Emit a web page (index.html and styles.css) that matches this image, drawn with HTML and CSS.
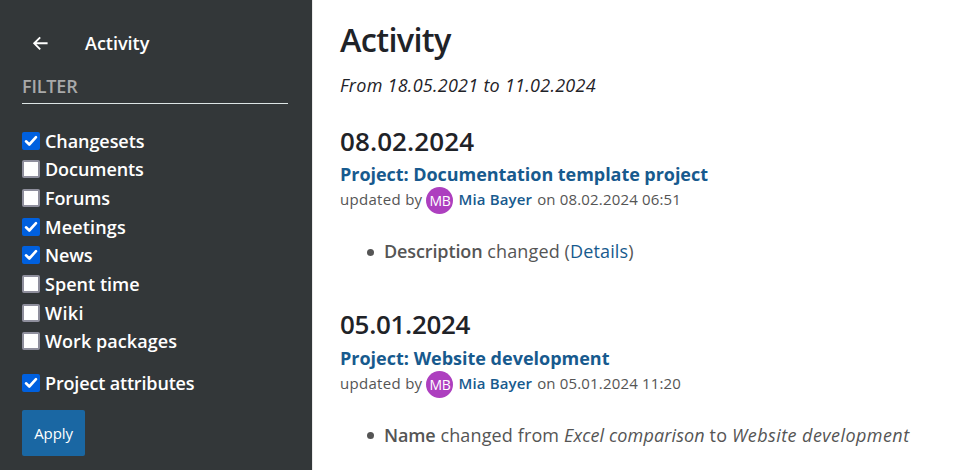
FILE: index.html
```html
<!DOCTYPE html>
<html lang="en">
<head>
<meta charset="utf-8">
<title>Activity</title>
<link rel="stylesheet" href="styles.css">
</head>
<body>
<aside class="sidebar">
  <header class="menu-head">
    <svg class="back" viewBox="0 0 16 16" width="16" height="16"><path d="M8.2 2.3 2.2 8.3 8.2 14.3M2.4 8.3H15.6" fill="none" stroke="#fff" stroke-width="1.9"/></svg>
    <span class="menu-title">Activity</span>
  </header>
  <div class="filter-title">FILTER</div>
  <form class="filters">
    <label class="row"><span class="box on"><svg viewBox="0 0 18 18"><path d="M4 9.3 7.3 12.5 14 5.2"/></svg></span><span class="t1">Changesets</span></label>
    <label class="row"><span class="box"></span><span class="t2">Documents</span></label>
    <label class="row"><span class="box"></span><span class="t3">Forums</span></label>
    <label class="row"><span class="box on"><svg viewBox="0 0 18 18"><path d="M4 9.3 7.3 12.5 14 5.2"/></svg></span><span class="t4">Meetings</span></label>
    <label class="row"><span class="box on"><svg viewBox="0 0 18 18"><path d="M4 9.3 7.3 12.5 14 5.2"/></svg></span><span class="t5">News</span></label>
    <label class="row"><span class="box"></span><span class="t6">Spent time</span></label>
    <label class="row"><span class="box"></span><span class="t7">Wiki</span></label>
    <label class="row"><span class="box"></span><span class="t8">Work packages</span></label>
    <label class="row attributes"><span class="box on"><svg viewBox="0 0 18 18"><path d="M4 9.3 7.3 12.5 14 5.2"/></svg></span><span class="t9">Project attributes</span></label>
    <button class="apply" type="button">Apply</button>
  </form>
</aside>
<main class="content">
  <h1>Activity</h1>
  <p class="range">From 18.05.2021 to 11.02.2024</p>
  <section class="day">
    <h2>08.02.2024</h2>
    <h3><a>Project: Documentation template project</a></h3>
    <div class="meta"><span class="by">updated by</span><span class="avatar">MB</span><a class="user">Mia Bayer</a><span class="on-date">on 08.02.2024 06:51</span></div>
    <ul><li><b>Description</b> changed (<a>Details</a>)</li></ul>
  </section>
  <section class="day previous">
    <h2>05.01.2024</h2>
    <h3><a>Project: Website development</a></h3>
    <div class="meta"><span class="by">updated by</span><span class="avatar">MB</span><a class="user">Mia Bayer</a><span class="on-date">on 05.01.2024 11:20</span></div>
    <ul><li><b>Name</b> changed from <i>Excel comparison</i> to <i class="new">Website development</i></li></ul>
  </section>
</main>
</body>
</html>
```
FILE: styles.css
```css
* { box-sizing: border-box; }
body {
  margin: 0;
  height: 470px;
  display: flex;
  overflow: hidden;
  background: #fff;
  color: #1f2328;
  font: 18px "Open Sans", "Noto Sans", sans-serif;
  white-space: nowrap;
}
h1, h2, h3, p, ul { margin: 0; padding: 0; }
.sidebar {
  width: 313px;
  flex: none;
  padding: 28px 24px 0 22px;
  background: #333739;
  border-right: 1px solid #eaeaea;
  color: #fff;
}
.menu-head { display: flex; align-items: center; height: 30px; padding-left: 10px; }
.back { margin-right: 37px; }
.menu-title { font-weight: 600; letter-spacing: 0; }
.filter-title {
  height: 46px;
  padding-top: 13px;
  line-height: 30px;
  color: #a9a9a9;
  font-weight: 600;
  letter-spacing: -0.17px;
  border-bottom: 1px solid #dde5e5;
}
.filters { padding-top: 22.5px; }
.row { display: flex; align-items: center; gap: 5px; height: 28.66px; font-weight: 600; }
.t1, .t2 { letter-spacing: -0.07px; }
.t3, .t5 { letter-spacing: -0.15px; }
.t4 { letter-spacing: 0.15px; }
.t6 { letter-spacing: 0.03px; }
.t7 { letter-spacing: 0.4px; }
.t8 { letter-spacing: 0.06px; }
.t9 { letter-spacing: -0.16px; }
.attributes { margin-top: 13px; }
.box { width: 18px; height: 18px; flex: none; background: #fff; border: 2px solid #8f8f9d; border-radius: 2px; }
.box.on { background: #0060df; border: 0; }
.box svg { display: block; fill: none; stroke: #fff; stroke-width: 2.6; stroke-linecap: round; stroke-linejoin: round; }
.apply {
  display: block;
  width: 63px;
  height: 46px;
  margin-top: 12.5px;
  padding: 0;
  background: #1a67a3;
  color: #fff;
  border: 0;
  border-radius: 2px;
  font: 15px "Open Sans", sans-serif;
  letter-spacing: -0.1px;
}
.content { flex: 1; padding: 18px 0 0 27px; }
h1 { font-weight: 600; font-size: 32.5px; line-height: 44px; letter-spacing: -0.7px; }
.range { font-style: italic; line-height: 26px; margin-top: 10px; letter-spacing: 0.26px; }
.day { height: 183.5px; padding-top: 27px; color: #555; }
h2 { color: #1f2328; font-weight: 600; font-size: 26px; line-height: 32px; letter-spacing: 0.1px; }
.previous { padding-top: 26px; }
.previous h2 { letter-spacing: -0.3px; margin-bottom: 1px; }
h3 { font-weight: 700; font-size: 18px; line-height: 30px; letter-spacing: -0.05px; padding-top: 2px; }
.previous h3 { letter-spacing: 0; }
a { color: #175a8e; }
.meta { display: flex; align-items: center; height: 26px; margin-top: -3px; font-size: 15px; }
.by { letter-spacing: 0.3px; }
.avatar {
  width: 27px; height: 27px; margin: 3px 5px 0 4px;
  border-radius: 50%; background: #ad3fbf; color: #fff;
  font-size: 14px; line-height: 28px; text-align: center; letter-spacing: -0.5px;
}
.user { font-weight: 600; margin-right: 5px; letter-spacing: 0.15px; }
.on-date { letter-spacing: 0.17px; }
ul { list-style: none; margin-top: 25px; line-height: 28px; }
li { display: flex; align-items: center; white-space: pre; padding-left: 27px; letter-spacing: 0.13px; }
li::before { content: ""; width: 7px; height: 7px; margin: 2px 10px 0 0; border-radius: 50%; background: #555; }
b { font-weight: 600; letter-spacing: -0.12px; }
.new { letter-spacing: 0.44px; }
```
